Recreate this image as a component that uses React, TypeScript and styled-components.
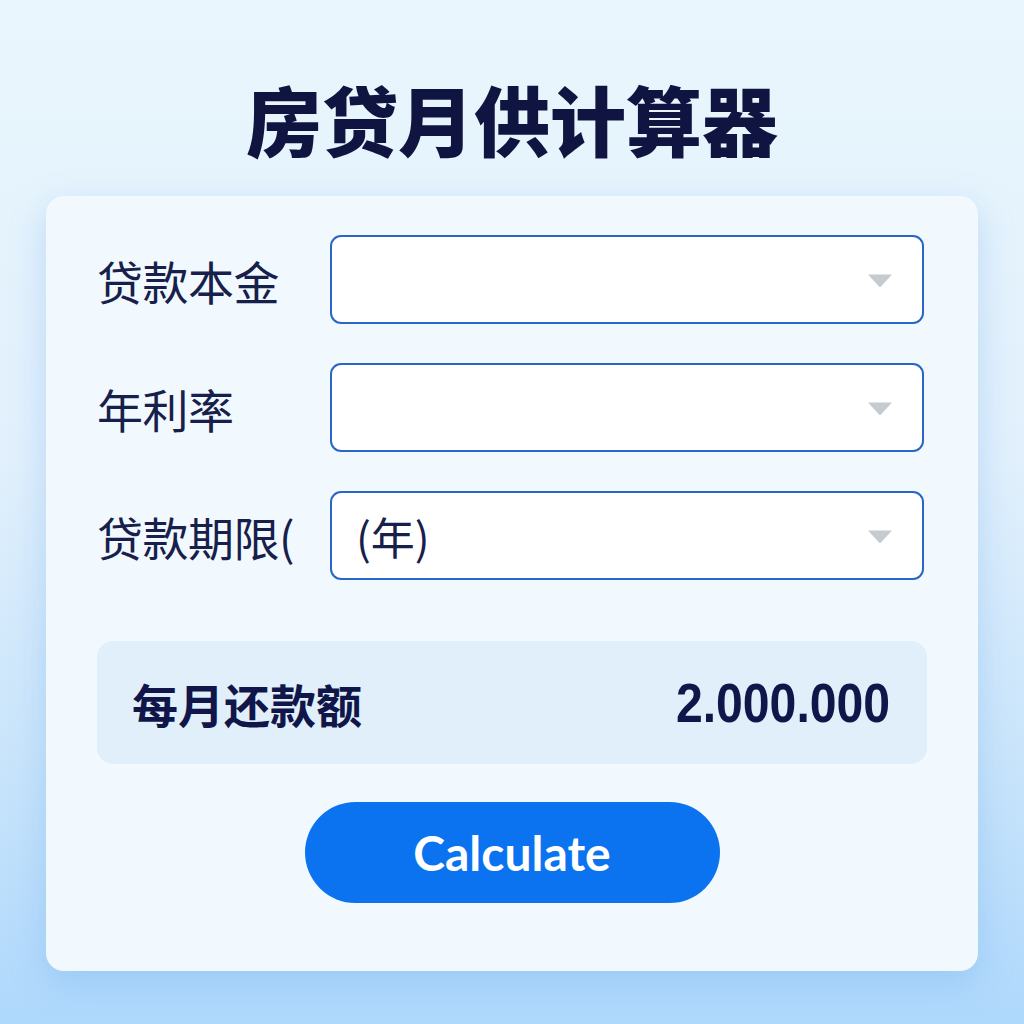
import styled, { createGlobalStyle } from "styled-components";

const GlobalStyle = createGlobalStyle`
  html, body {
    margin: 0;
    padding: 0;
  }
  body {
    min-height: 1024px;
    background: linear-gradient(180deg, #e9f6fd 0%, #e1f0fc 45%, #c8e4fb 75%, #aed8fc 100%);
    font-family: "Noto Sans CJK SC", "Noto Sans", sans-serif;
  }
`;

const Page = styled.main`
  width: 1024px;
  height: 1024px;
  display: flex;
  flex-direction: column;
  align-items: center;
  padding-top: 66px;
  box-sizing: border-box;
`;

const Title = styled.h1`
  margin: 0 0 26px;
  font-size: 76px;
  line-height: 104px;
  font-weight: 900;
  color: #0f1440;
`;

const Card = styled.section`
  width: 932px;
  box-sizing: border-box;
  padding: 39px 54px 68px 51px;
  background: #f1f9fe;
  border-radius: 18px;
  box-shadow: 0 12px 34px rgba(110, 170, 235, 0.35);
  display: flex;
  flex-direction: column;
`;

const Form = styled.div`
  display: flex;
  flex-direction: column;
  gap: 39px;
`;

const Row = styled.label`
  display: grid;
  grid-template-columns: 233px 1fr;
  align-items: center;
`;

const Label = styled.span`
  font-size: 46px;
  font-weight: 400;
  color: #17204a;
  white-space: nowrap;
  letter-spacing: -0.5px;
`;

const Select = styled.div`
  position: relative;
  height: 89px;
  box-sizing: border-box;
  border: 2px solid #2a66c8;
  border-radius: 11px;
  background: #ffffff;
  display: flex;
  align-items: center;
  padding: 0 24px;
  font-size: 44px;
  color: #17204a;
`;

const Chevron = styled.svg`
  position: absolute;
  right: 29px;
  top: 50%;
  margin-top: -7px;
`;

const Result = styled.div`
  margin-top: 61px;
  margin-right: -3px;
  height: 123px;
  box-sizing: border-box;
  padding: 0 37px 0 35px;
  background: #e0eff9;
  border-radius: 16px;
  display: flex;
  align-items: center;
  justify-content: space-between;
`;

const ResultLabel = styled.span`
  font-size: 46px;
  font-weight: 700;
  color: #10164a;
`;

const Amount = styled.span`
  font-family: "Liberation Sans Narrow", "Liberation Sans", Arial, sans-serif;
  font-size: 56px;
  font-weight: 700;
  color: #10164a;
  display: inline-block;
  transform: scaleX(0.86);
  transform-origin: right center;
`;

const ButtonRow = styled.div`
  margin-top: 38px;
  display: flex;
  justify-content: center;
  padding-left: 3px;
`;

const Button = styled.button`
  width: 415px;
  height: 101px;
  border: none;
  border-radius: 51px;
  background: #0b73ef;
  color: #ffffff;
  font-family: Lato, "Open Sans", sans-serif;
  font-weight: 700;
  font-size: 48px;
  cursor: pointer;
`;

const ChevronIcon = () => (
  <Chevron width="26" height="15" viewBox="0 0 26 15">
    <path d="M1 1.5 L25 1.5 L14 13.5 Q13 14.5 12 13.5 Z" fill="#c6cbd1" />
  </Chevron>
);

const fields = [
  { label: "贷款本金", value: "" },
  { label: "年利率", value: "" },
  { label: "贷款期限(", value: "(年)" },
];

export default function App() {
  return (
    <>
      <GlobalStyle />
      <Page>
        <Title>房贷月供计算器</Title>
        <Card>
          <Form>
            {fields.map((f) => (
              <Row key={f.label}>
                <Label>{f.label}</Label>
                <Select>
                  {f.value}
                  <ChevronIcon />
                </Select>
              </Row>
            ))}
          </Form>
          <Result>
            <ResultLabel>每月还款额</ResultLabel>
            <Amount>2.000.000</Amount>
          </Result>
          <ButtonRow>
            <Button>Calculate</Button>
          </ButtonRow>
        </Card>
      </Page>
    </>
  );
}
